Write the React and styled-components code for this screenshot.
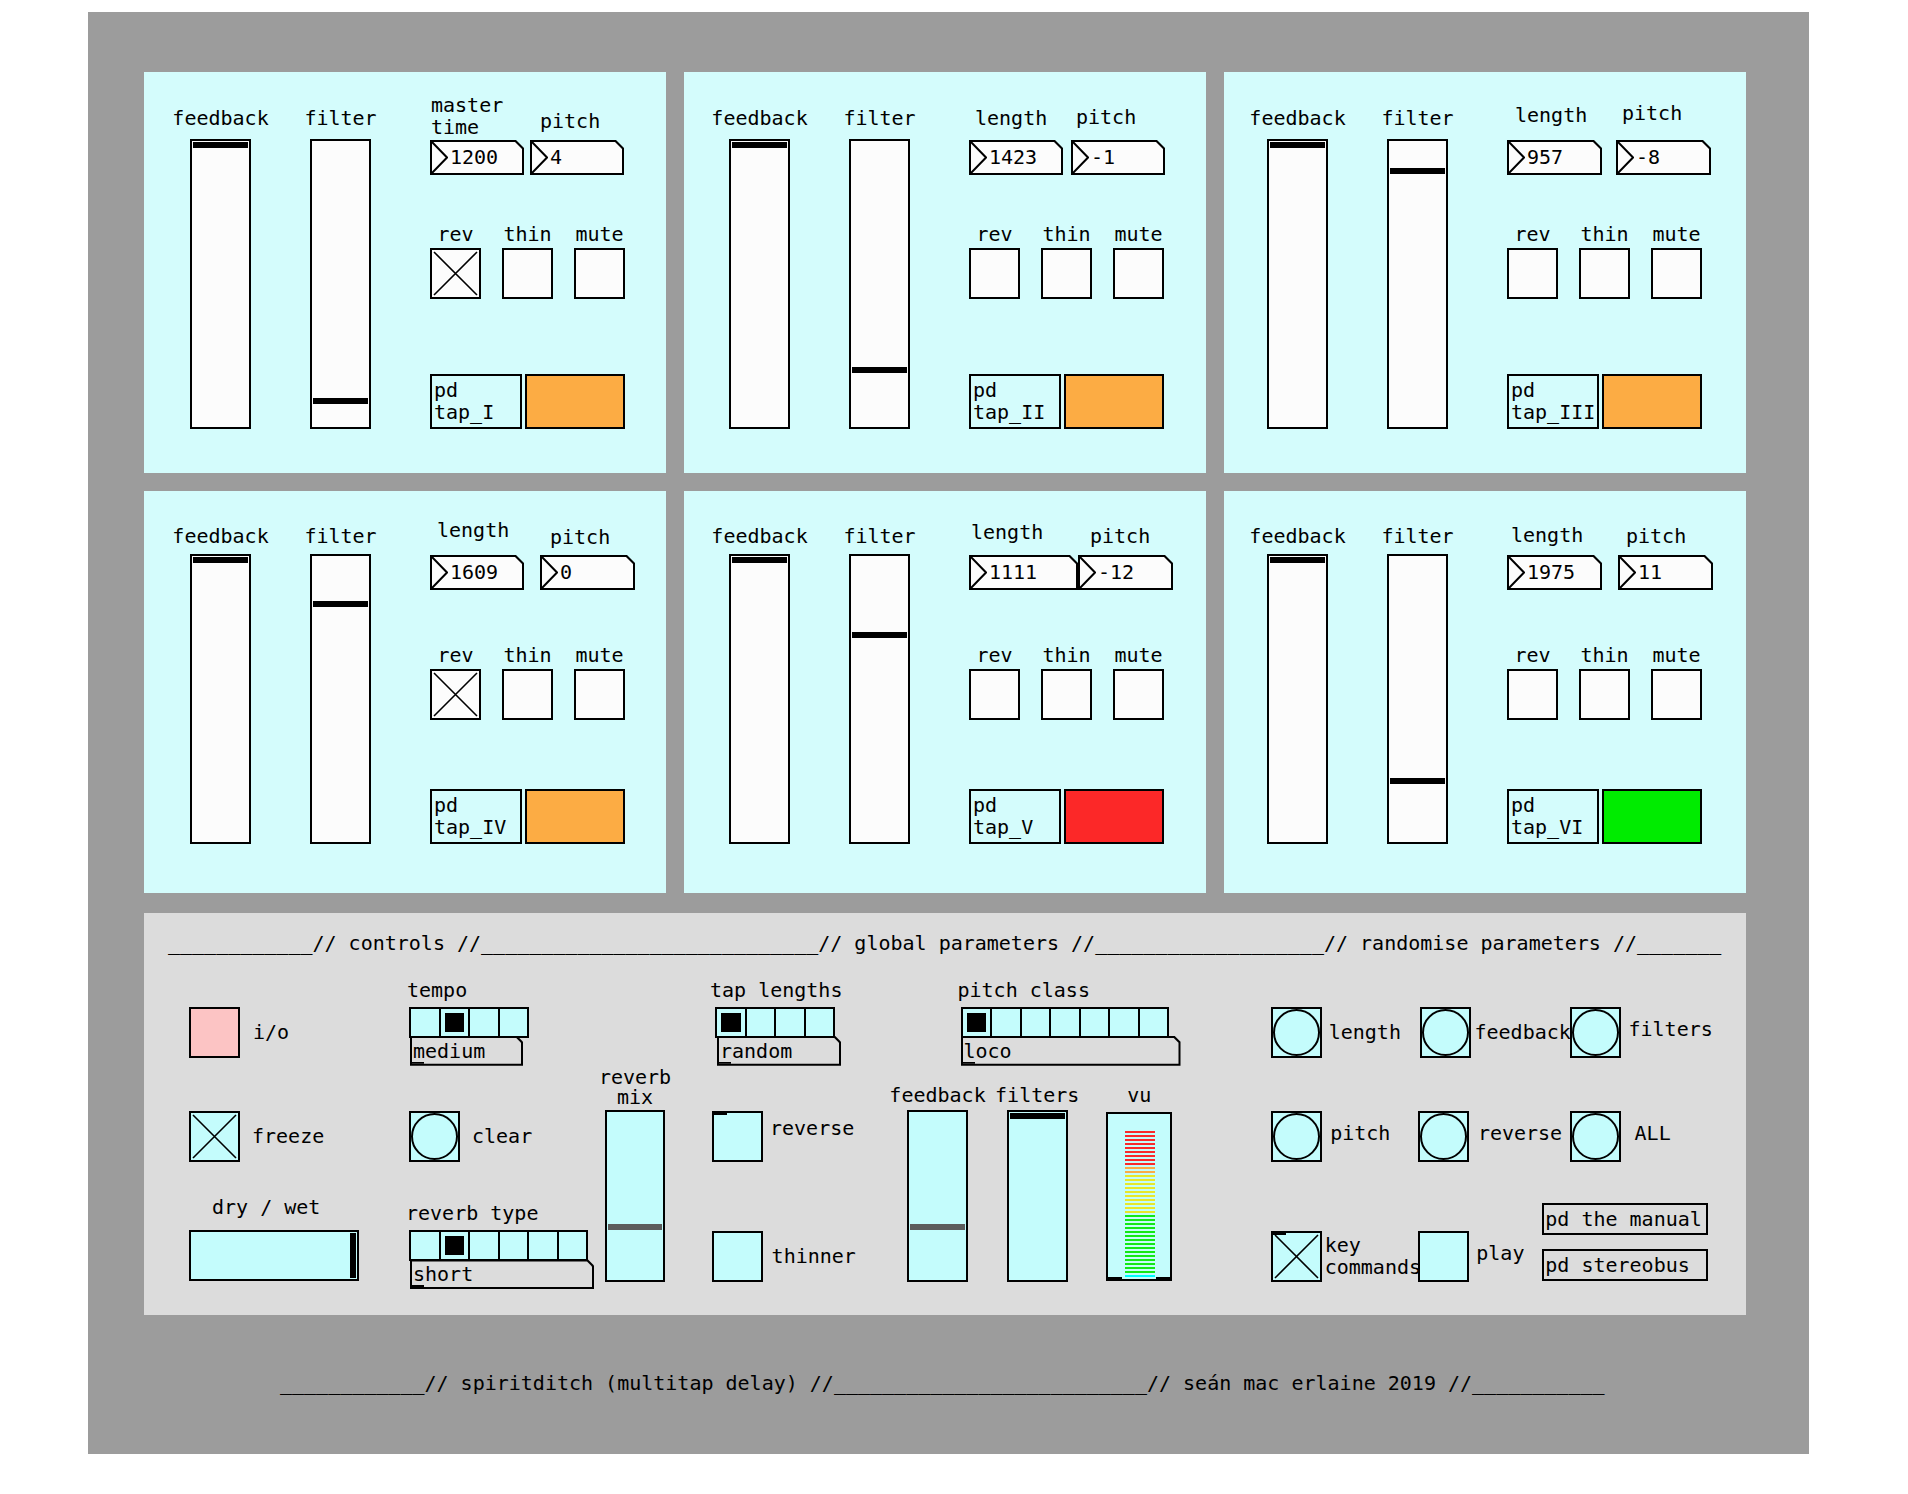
import React from 'react';
import styled, { createGlobalStyle, css } from 'styled-components';

const FONT = `"DejaVu Sans Mono", "Liberation Mono", monospace`;

const GlobalStyle = createGlobalStyle`
  html, body { margin: 0; padding: 0; background: #ffffff; }
  body { font-family: ${FONT}; font-size: 20px; color: #000; }
  * { box-sizing: border-box; }
`;

const offset = css`
  margin-top: ${(p) => p.$mt || 0}px;
  margin-left: ${(p) => p.$ml || 0}px;
`;

const Page = styled.div`
  width: 1908px;
  height: 1494px;
  padding: 12px 0 0 88px;
`;

const Canvas = styled.div`
  width: 1721px;
  height: 1442px;
  background: #9c9c9c;
  padding: 60px 0 0 56px;
`;

const TapGrid = styled.div`
  display: grid;
  grid-template-columns: repeat(3, 522px);
  grid-template-rows: 401px 402px;
  gap: 18px;
`;

const TapPanel = styled.div`
  background: #d4fcfc;
  display: flex;
  align-items: flex-start;
  padding: ${(p) => p.$pt}px 0 0 ${(p) => p.$pl}px;
`;

const SliderCol = styled.div`
  width: ${(p) => p.$w || 61}px;
  flex-shrink: 0;
  display: flex;
  flex-direction: column;
  align-items: center;
  margin-right: ${(p) => p.$mr || 0}px;
`;

const Text = styled.div`
  ${offset}
  margin-bottom: ${(p) => p.$mb || 0}px;
  line-height: ${(p) => p.$lh || 22}px;
  white-space: pre;
  text-align: ${(p) => (p.$center ? 'center' : 'left')};
  flex-shrink: 0;
`;

const VTrack = styled.div`
  ${offset}
  position: relative;
  flex-shrink: 0;
  width: ${(p) => p.$w}px;
  height: ${(p) => p.$h}px;
  border: 2px solid #000;
  background: ${(p) => p.$bg};
`;

const VKnob = styled.div`
  position: absolute;
  left: 1px;
  right: 1px;
  height: 6px;
  background: ${(p) => p.$c || '#000'};
`;

const RightCol = styled.div`
  display: flex;
  flex-direction: column;
  width: 200px;
`;

const NumRow = styled.div`
  display: flex;
  height: 68px;
`;

const NumGroup = styled.div`
  display: flex;
  flex-direction: column;
  justify-content: flex-end;
  margin-left: ${(p) => p.$ml || 0}px;
`;

const CutOuter = styled.div`
  ${offset}
  position: relative;
  flex-shrink: 0;
  width: ${(p) => p.$w}px;
  height: ${(p) => p.$h}px;
  background: #000;
  padding: 2px;
  clip-path: polygon(0 0, calc(100% - ${(p) => p.$cut}px) 0, 100% ${(p) => p.$cut}px, 100% 100%, 0 100%);
`;

const CutInner = styled.div`
  position: relative;
  height: 100%;
  display: flex;
  align-items: center;
  background: ${(p) => p.$bg};
  clip-path: polygon(0 0, calc(100% - ${(p) => p.$cut - 1}px) 0, 100% ${(p) => p.$cut - 1}px, 100% 100%, 0 100%);
`;

const NumText = styled.span`
  margin-left: 2px;
  line-height: 31px;
`;

const SymText = styled.span`
  padding-left: 1px;
  line-height: 26px;
`;

const Outlet = styled.div`
  position: absolute;
  left: 0;
  bottom: 0;
  width: 12px;
  height: 2px;
  background: #000;
`;

const ToggleRow = styled.div`
  display: flex;
  gap: 21px;
  margin-top: ${(p) => p.$mt}px;
`;

const ToggleGroup = styled.div`
  width: 51px;
  display: flex;
  flex-direction: column;
  align-items: center;
`;

const Square = styled.div`
  ${offset}
  position: relative;
  flex-shrink: 0;
  width: ${(p) => p.$w || 51}px;
  height: ${(p) => p.$h || 51}px;
  border: 2px solid #000;
  background: ${(p) => p.$bg};
`;

const Inlet = styled.div`
  position: absolute;
  top: 0;
  left: 0;
  width: 13px;
  height: 2px;
  background: #000;
`;

const Circle = styled.div`
  width: 100%;
  height: 100%;
  border: 2px solid #000;
  border-radius: 50%;
`;

const PdRow = styled.div`
  display: flex;
  gap: 3px;
  margin-top: ${(p) => p.$mt}px;
`;

const PdBox = styled.div`
  ${offset}
  flex-shrink: 0;
  width: ${(p) => p.$w}px;
  height: ${(p) => p.$h}px;
  border: 2px solid #000;
  padding: ${(p) => (p.$multi ? '3px 0 0 2px' : '0 0 0 1px')};
  line-height: ${(p) => (p.$multi ? 22 : p.$h - 4)}px;
  white-space: pre;
`;

const StateBox = styled.div`
  width: 100px;
  height: 55px;
  border: 2px solid #000;
  background: ${(p) => p.$c};
`;

/* ---- controls panel ---- */

const Controls = styled.div`
  margin-top: 20px;
  width: 1602px;
  height: 402px;
  background: #dcdcdc;
  display: flex;
  flex-direction: column;
`;

const Header = styled.div`
  height: 60px;
  padding: 18px 0 0 24px;
  line-height: 24px;
  white-space: pre;
`;

const Body = styled.div`
  display: flex;
  align-items: flex-start;
  padding-left: 45px;
`;

const Col = styled.div`
  width: ${(p) => p.$w}px;
  flex-shrink: 0;
  display: flex;
  flex-direction: column;
  align-items: flex-start;
`;

const Row = styled.div`
  ${offset}
  display: flex;
  align-items: ${(p) => p.$align || 'center'};
  gap: ${(p) => p.$gap || 0}px;
`;

const Cell = styled.div`
  width: ${(p) => p.$w}px;
  flex-shrink: 0;
  display: flex;
  align-items: ${(p) => p.$align || 'center'};
`;

const RadioStrip = styled.div`
  ${offset}
  display: flex;
  height: 31px;
  border: 2px solid #000;
  background: #c4fcfc;
`;

const RadioCell = styled.div`
  width: ${(p) => (p.$first ? 27.5 : 29.5)}px;
  height: 100%;
  border-left: ${(p) => (p.$first ? 0 : 2)}px solid #000;
  padding: 4px;
`;

const RadioDot = styled.div`
  width: 100%;
  height: 100%;
  background: #000;
`;

const HTrack = styled.div`
  ${offset}
  position: relative;
  width: 170px;
  height: 51px;
  border: 2px solid #000;
  background: #c4fcfc;
`;

const HKnob = styled.div`
  position: absolute;
  top: 1px;
  bottom: 1px;
  right: 1px;
  width: 6px;
  background: #000;
`;

const SliderGroupRow = styled.div`
  ${offset}
  display: flex;
  align-items: flex-start;
  gap: 38.7px;
`;

const VuBox = styled.div`
  ${offset}
  position: relative;
  width: 66px;
  height: 169px;
  border: 2px solid #000;
  background: #c4fcfc;
  padding: 16.5px 0 0 17px;
  display: flex;
  flex-direction: column;
  gap: 2px;
`;

const VuBar = styled.div`
  width: 30px;
  height: 2px;
  flex-shrink: 0;
  background: ${(p) => p.$c};
`;

const VuFoot = styled.div`
  position: absolute;
  bottom: -2px;
  ${(p) => (p.$right ? 'right: -2px;' : 'left: -2px;')}
  width: 16px;
  height: 4px;
  background: #000;
`;

const PdStack = styled.div`
  display: flex;
  flex-direction: column;
  gap: 13.7px;
`;

const Footer = styled.div`
  margin: 56px 0 0 136px;
  line-height: 24px;
  white-space: pre;
`;

/* ---- widgets ---- */

function Toggle({ on, inlet, bg, ...rest }) {
  return (
    <Square $bg={bg} {...rest}>
      {on && (
        <svg width="47" height="47" viewBox="0 0 47 47" style={{ display: 'block' }}>
          <path d="M2 2 L45 45 M45 2 L2 45" stroke="#000" strokeWidth="1.6" fill="none" />
        </svg>
      )}
      {inlet && <Inlet />}
    </Square>
  );
}

function Bang(props) {
  return (
    <Square $bg="#c4fcfc" {...props}>
      <Circle />
    </Square>
  );
}

function NumBox({ w, value }) {
  return (
    <CutOuter $w={w} $h={35} $cut={8}>
      <CutInner $cut={8} $bg="#fcfcfc">
        <svg width="16" height="31" viewBox="0 0 16 31" style={{ display: 'block', flexShrink: 0 }}>
          <polyline points="0,0 15,15.5 0,31" stroke="#000" strokeWidth="2" fill="none" />
        </svg>
        <NumText>{value}</NumText>
      </CutInner>
    </CutOuter>
  );
}

function SymbolBox({ w, text, ...rest }) {
  return (
    <CutOuter $w={w} $h={30} $cut={6} {...rest}>
      <CutInner $cut={6} $bg="#dcdcdc">
        <SymText>{text}</SymText>
        <Outlet />
      </CutInner>
    </CutOuter>
  );
}

function HRadio({ n, sel, ...rest }) {
  return (
    <RadioStrip {...rest}>
      {Array.from({ length: n }, (_, i) => (
        <RadioCell key={i} $first={i === 0}>
          {i === sel && <RadioDot />}
        </RadioCell>
      ))}
    </RadioStrip>
  );
}

const VU_COLORS = [
  ...Array(9).fill('#fc2828'),
  ...Array(2).fill('#fcac44'),
  ...Array(10).fill('#e8e828'),
  ...Array(15).fill('#14e814'),
  '#00fcfc',
];

const TAPS = [
  { id: 'I', pl: 46, flt: 259, len: 'master\ntime', lenDx: 1, lenMb: 2, lenVal: '1200', w1: 94, gap: 6, pDx: 10, pMb: 8, pVal: '4', w2: 94, rev: true, c: '#fcac44' },
  { id: 'II', pl: 45, flt: 228, len: 'length', lenDx: 6, lenMb: 11, lenVal: '1423', w1: 94, gap: 8, pDx: 5, pMb: 12, pVal: '-1', w2: 94, rev: false, c: '#fcac44' },
  { id: 'III', pl: 43, flt: 29, len: 'length', lenDx: 8, lenMb: 14, lenVal: '957', w1: 95, gap: 14, pDx: 6, pMb: 16, pVal: '-8', w2: 95, rev: false, c: '#fcac44' },
  { id: 'IV', pl: 46, flt: 47, len: 'length', lenDx: 7, lenMb: 14, lenVal: '1609', w1: 94, gap: 16, pDx: 10, pMb: 7, pVal: '0', w2: 95, rev: true, c: '#fcac44' },
  { id: 'V', pl: 45, flt: 78, len: 'length', lenDx: 2, lenMb: 12, lenVal: '1111', w1: 109, gap: 0, pDx: 12, pMb: 8, pVal: '-12', w2: 95, rev: false, c: '#fc2828' },
  { id: 'VI', pl: 43, flt: 224, len: 'length', lenDx: 4, lenMb: 9, lenVal: '1975', w1: 95, gap: 16, pDx: 8, pMb: 8, pVal: '11', w2: 95, rev: false, c: '#00ec00' },
];

function Tap({ t, second }) {
  return (
    <TapPanel $pt={second ? 31 : 35} $pl={t.pl}>
      <SliderCol $mr={59}>
        <Text $mt={second ? 3 : 0}>feedback</Text>
        <VTrack $mt={second ? 7 : 10} $w={61} $h={290} $bg="#fcfcfc">
          <VKnob style={{ top: 1 }} />
        </VTrack>
      </SliderCol>
      <SliderCol $mr={59}>
        <Text $mt={second ? 3 : 0}>filter</Text>
        <VTrack $mt={second ? 7 : 10} $w={61} $h={290} $bg="#fcfcfc">
          <VKnob style={{ top: t.flt - 2 }} />
        </VTrack>
      </SliderCol>
      <RightCol>
        <NumRow>
          <NumGroup>
            <Text $ml={t.lenDx} $mb={t.lenMb}>{t.len}</Text>
            <NumBox w={t.w1} value={t.lenVal} />
          </NumGroup>
          <NumGroup $ml={t.gap}>
            <Text $ml={t.pDx} $mb={t.pMb}>pitch</Text>
            <NumBox w={t.w2} value={t.pVal} />
          </NumGroup>
        </NumRow>
        <ToggleRow $mt={second ? 53.6 : 48}>
          {['rev', 'thin', 'mute'].map((name) => (
            <ToggleGroup key={name}>
              <Text $mb={3}>{name}</Text>
              <Toggle bg="#fcfcfc" on={name === 'rev' && t.rev} />
            </ToggleGroup>
          ))}
        </ToggleRow>
        <PdRow $mt={second ? 69.4 : 75}>
          <PdBox $w={92} $h={55} $multi>{`pd\ntap_${t.id}`}</PdBox>
          <StateBox $c={t.c} />
        </PdRow>
      </RightCol>
    </TapPanel>
  );
}

const u = (n) => '_'.repeat(n);
const HEADER =
  u(12) + '// controls //' + u(28) + '// global parameters //' + u(19) + '// randomise parameters //' + u(7);
const FOOTER =
  u(12) + '// spiritditch (multitap delay) //' + u(26) + '// seán mac erlaine 2019 //' + u(11);

function ControlPanel() {
  return (
    <Controls>
      <Header>{HEADER}</Header>
      <Body>
        <Col $w={220}>
          <Row $mt={33.7} $gap={13}>
            <Toggle bg="#fcc4c4" />
            <Text>i/o</Text>
          </Row>
          <Row $mt={53.3} $gap={12}>
            <Toggle bg="#c4fcfc" on />
            <Text>freeze</Text>
          </Row>
          <Text $mt={34.5} $ml={23}>dry / wet</Text>
          <HTrack $mt={12}>
            <HKnob />
          </HTrack>
        </Col>

        <Col $w={196}>
          <Text $mt={5.7} $ml={-2}>tempo</Text>
          <HRadio $mt={6} n={4} sel={1} />
          <SymbolBox $mt={-2} $ml={1} w={113} text="medium" />
          <Row $mt={45.3} $gap={12}>
            <Bang />
            <Text>clear</Text>
          </Row>
          <Text $mt={40.5} $ml={-3}>reverb type</Text>
          <HRadio $mt={6} n={6} sel={1} />
          <SymbolBox $mt={-2} $ml={1} w={184} text="short" />
        </Col>

        <Col $w={107}>
          <SliderCol $w={60}>
            <Text $mt={94} $lh={20} $center>{'reverb\nmix'}</Text>
            <VTrack $mt={3} $w={60} $h={172} $bg="#c4fcfc">
              <VKnob $c="#5c5c5c" style={{ top: 112 }} />
            </VTrack>
          </SliderCol>
        </Col>

        <Col $w={195}>
          <Text $mt={5.7} $ml={-2}>tap lengths</Text>
          <HRadio $mt={6} $ml={3} n={4} sel={0} />
          <SymbolBox $mt={-2} $ml={5} w={124} text="random" />
          <Row $mt={45.3} $gap={7} $align="flex-start">
            <Toggle bg="#c4fcfc" inlet />
            <Text $mt={6}>reverse</Text>
          </Row>
          <Row $mt={68.6} $gap={8.6}>
            <Toggle bg="#c4fcfc" />
            <Text>thinner</Text>
          </Row>
        </Col>

        <Col $w={363.7}>
          <Text $mt={5.7} $ml={50.5}>pitch class</Text>
          <HRadio $mt={6} $ml={53.5} n={7} sel={0} />
          <SymbolBox $mt={-2} $ml={53.5} w={220} text="loco" />
          <SliderGroupRow $mt={18.8}>
            <SliderCol>
              <Text $mb={3.5}>feedback</Text>
              <VTrack $w={61} $h={172} $bg="#c4fcfc">
                <VKnob $c="#5c5c5c" style={{ top: 112 }} />
              </VTrack>
            </SliderCol>
            <SliderCol>
              <Text $mb={3.5}>filters</Text>
              <VTrack $w={61} $h={172} $bg="#c4fcfc">
                <VKnob style={{ top: 1.5 }} />
              </VTrack>
            </SliderCol>
            <SliderCol $w={66}>
              <Text $mb={3.5}>vu</Text>
              <VuBox $mt={2.5}>
                {VU_COLORS.map((c, i) => (
                  <VuBar key={i} $c={c} />
                ))}
                <VuFoot />
                <VuFoot $right />
              </VuBox>
            </SliderCol>
          </SliderGroupRow>
        </Col>

        <Col $w={440}>
          <Row $mt={33.7}>
            <Cell $w={149.8}>
              <Bang />
              <Text $ml={7}>length</Text>
            </Cell>
            <Cell $w={149.5}>
              <Bang />
              <Text $ml={3}>feedback</Text>
            </Cell>
            <Cell $w={140}>
              <Bang />
              <Text $ml={7.5} $mt={-6}>filters</Text>
            </Cell>
          </Row>
          <Row $mt={53.3}>
            <Cell $w={147.6}>
              <Bang />
              <Text $ml={8.5} $mt={-6}>pitch</Text>
            </Cell>
            <Cell $w={151.7}>
              <Bang />
              <Text $ml={8.6} $mt={-6}>reverse</Text>
            </Cell>
            <Cell $w={140}>
              <Bang />
              <Text $ml={13.6} $mt={-6}>ALL</Text>
            </Cell>
          </Row>
          <Row $mt={41} $align="flex-start">
            <Cell $w={147.6} $align="flex-start">
              <Toggle $mt={27.6} bg="#c4fcfc" on inlet />
              <Text $mt={31} $ml={3}>{'key\ncommands'}</Text>
            </Cell>
            <Cell $w={124} $align="flex-start">
              <Toggle $mt={27.6} bg="#c4fcfc" />
              <Text $mt={39} $ml={7}>play</Text>
            </Cell>
            <PdStack>
              <PdBox $w={165.5} $h={32}>pd the manual</PdBox>
              <PdBox $w={165.5} $h={32}>pd stereobus</PdBox>
            </PdStack>
          </Row>
        </Col>
      </Body>
    </Controls>
  );
}

export default function App() {
  return (
    <Page>
      <GlobalStyle />
      <Canvas>
        <TapGrid>
          {TAPS.map((t, i) => (
            <Tap key={t.id} t={t} second={i >= 3} />
          ))}
        </TapGrid>
        <ControlPanel />
        <Footer>{FOOTER}</Footer>
      </Canvas>
    </Page>
  );
}
